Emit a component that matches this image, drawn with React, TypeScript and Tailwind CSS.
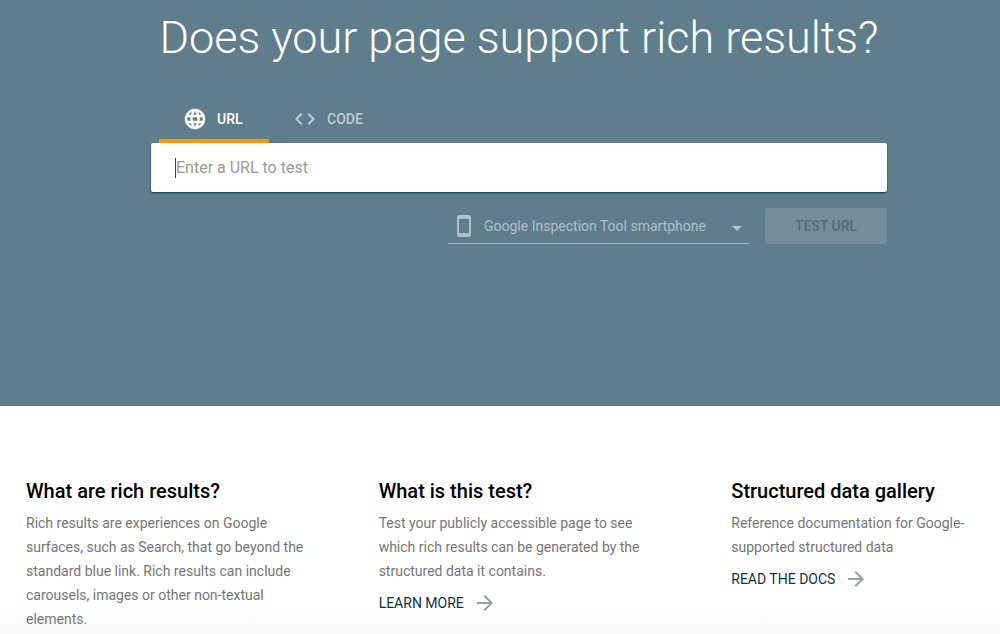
import React from 'react';
import { MdArrowDropDown, MdArrowForward, MdCode, MdLanguage, MdStayCurrentPortrait } from 'react-icons/md';

const TOPICS = [
  {
    title: 'What are rich results?',
    text: 'Rich results are experiences on Google surfaces, such as Search, that go beyond the standard blue link. Rich results can include carousels, images or other non-textual elements.',
  },
  {
    title: 'What is this test?',
    text: 'Test your publicly accessible page to see which rich results can be generated by the structured data it contains.',
    link: 'LEARN MORE',
  },
  {
    title: 'Structured data gallery',
    text: 'Reference documentation for Google-supported structured data',
    link: 'READ THE DOCS',
  },
];

const Hero: React.FC = () => {
  return (
    <section className="bg-[#607d8b] pt-2 pb-[162px] pl-[151px] pr-[113px]">
      <h1 className="text-center text-[45px] leading-[60px] font-light text-white whitespace-nowrap">
        Does your page support rich results?
      </h1>

      <div role="tablist" className="mt-[27px] flex px-2 text-sm font-medium">
        <button role="tab" aria-selected="true" className="flex h-12 w-[110px] items-center gap-[10px] border-b-4 border-[#ff9800] px-6 pt-1 text-white">
          <MdLanguage size={24} className="[&>path:last-child]:stroke-current [&>path:last-child]:[stroke-width:0.5]" />
          URL
        </button>
        <button role="tab" aria-selected="false" className="flex h-12 items-center gap-[10px] border-b-4 border-transparent px-6 pt-1 text-[#bfcbd1]">
          <MdCode size={24} />
          CODE
        </button>
      </div>

      <div className="flex h-[49px] items-center rounded-xs bg-white px-6 shadow-[0_1px_2px_#0b3c4c]">
        <span className="h-5 w-px bg-[#444444]" />
        <input
          type="text"
          aria-label="Enter a URL to test"
          placeholder="Enter a URL to test"
          className="min-w-0 flex-1 text-base text-black outline-none placeholder:text-[#9a9a9a]"
        />
      </div>

      <div className="mt-4 flex justify-end gap-4">
        <div className="grid h-9 w-[301px] grid-cols-[32px_1fr_24px] items-center border-b border-[#9fb1b9] text-[#b0bec5]">
          <MdStayCurrentPortrait size={24} className="ml-1" />
          <select
            aria-label="User agent"
            disabled
            className="w-full appearance-none bg-transparent pl-1 text-sm text-[#afbec5] opacity-100"
          >
            <option>Google Inspection Tool smartphone</option>
          </select>
          <MdArrowDropDown size={24} className="mt-1 text-[#b7c5cb]" />
        </div>
        <button disabled className="h-9 w-[122px] rounded-[3px] bg-[#748d99] text-sm font-medium text-[#546e7b]">
          TEST URL
        </button>
      </div>
    </section>
  );
};

const Topics: React.FC = () => {
  return (
    <section className="grid flex-1 grid-cols-[353fr_353fr_269fr] bg-linear-to-t from-[#f8f8f8] to-white to-[24px] pt-[70px] pl-[26px]">
      {TOPICS.map((topic) => (
        <article key={topic.title} className="max-w-[285px]">
          <h2 className="text-xl leading-[30px] font-medium text-black whitespace-nowrap">{topic.title}</h2>
          <p className="mt-[5px] text-sm leading-6 text-[#757575]">{topic.text}</p>
          {topic.link && (
            <a href="#" className="mt-2 flex items-center gap-[9px] text-sm leading-6 text-[#0b3344]">
              {topic.link}
              <MdArrowForward size={24} className="text-[#90a4ae]" />
            </a>
          )}
        </article>
      ))}
    </section>
  );
};

const App: React.FC = () => {
  return (
    <main className="flex h-screen flex-col overflow-hidden bg-white font-[Roboto,sans-serif]">
      <Hero />
      <Topics />
    </main>
  );
};

export default App;
